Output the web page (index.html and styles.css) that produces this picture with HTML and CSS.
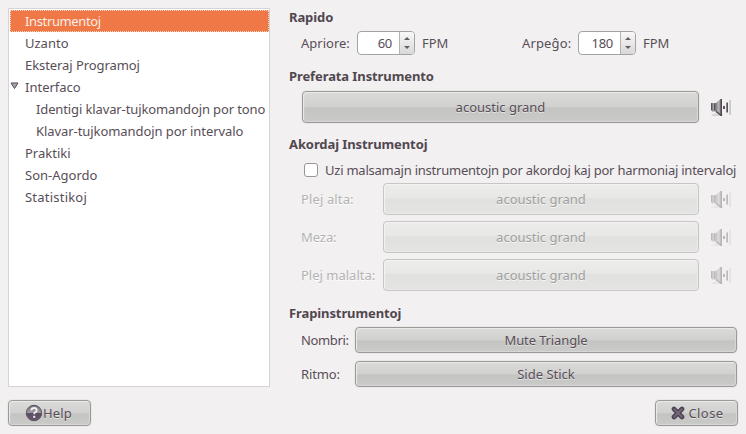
FILE: index.html
```
<!DOCTYPE html>
<html lang="eo">
<head>
<meta charset="utf-8">
<title>Preferoj</title>
<link rel="stylesheet" href="styles.css">
</head>
<body>
<svg class="defs" aria-hidden="true">
  <defs>
    <linearGradient id="metal" gradientUnits="userSpaceOnUse" x1="1" x2="12" y1="0" y2="0">
      <stop offset="0" stop-color="#5d535f"/><stop offset=".25" stop-color="#aaa8aa"/><stop offset=".42" stop-color="#7b747c"/><stop offset=".7" stop-color="#b9b8b6"/><stop offset="1" stop-color="#625963"/>
    </linearGradient>
    <linearGradient id="orb" x1="0" x2="0" y1="0" y2="1">
      <stop offset="0" stop-color="#777078"/><stop offset=".48" stop-color="#a09ba1"/><stop offset=".52" stop-color="#5b4c61"/><stop offset="1" stop-color="#68586e"/>
    </linearGradient>
    <symbol id="speaker" viewBox="0 0 22 20">
      <ellipse cx="7" cy="17.800" rx="6" ry="1.200" fill="#d6d4d4"/>
      <path d="M1 6h5L10.500 2h1.500v17h-1.500L6 14.500H2.500L1 13z" fill="url(#metal)"/>
      <path d="M1.500 6.500v6.500M4.500 6.500v7" stroke="#5b505d" fill="none"/>
      <path d="M11.300 2v17M6 14.500l5 3.700" stroke="#51464f" stroke-width="1.400" fill="none"/>
      <path d="M13 9h2v3h-2z" fill="#5b5363"/>
      <path d="M16.300 5.500h1.700v10h-1.700z" fill="#5c5361"/>
      <path d="M19.300 3h1.700v15h-1.700z" fill="#c8c6c6"/>
    </symbol>
  </defs>
</svg>
<div class="window">
  <div class="content">
    <ul class="tree">
      <li class="selected"><span class="w1">Instrumentoj</span></li>
      <li>Uzanto</li>
      <li><span class="w2">Eksteraj Programoj</span></li>
      <li class="parent"><svg class="expander" width="9" height="8" viewBox="0 0 9 8"><path d="M1 1h7L4.500 6.500z" fill="#a9a6aa" stroke="#514655"/></svg>Interfaco</li>
      <li class="child"><span class="w3">Identigi klavar-tujkomandojn por tono</span></li>
      <li class="child"><span class="w2">Klavar-tujkomandojn por intervalo</span></li>
      <li>Praktiki</li>
      <li>Son-Agordo</li>
      <li><span class="w5">Statistikoj</span></li>
    </ul>
    <div class="panel">
      <h2>Rapido</h2>
      <div class="tempo">
        <div class="field"><label>Apriore:</label><span class="spin"><span class="value">60</span><span class="steps"><i class="up"></i><i class="down"></i></span></span><span>FPM</span></div>
        <div class="field"><label class="w4">Arpeĝo:</label><span class="spin"><span class="value">180</span><span class="steps"><i class="up"></i><i class="down"></i></span></span><span>FPM</span></div>
      </div>
      <h2 class="second">Preferata Instrumento</h2>
      <div class="row main-instrument"><button class="btn">acoustic grand</button><svg class="speaker"><use href="#speaker"/></svg></div>
      <h2 class="third">Akordaj Instrumentoj</h2>
      <div class="check"><span class="box"></span><span class="w6">Uzi malsamajn instrumentojn por akordoj kaj por harmoniaj intervaloj</span></div>
      <div class="chords">
        <div class="row off"><label class="w4">Plej alta:</label><button class="btn" disabled>acoustic grand</button><svg class="speaker"><use href="#speaker"/></svg></div>
        <div class="row off"><label class="w2">Meza:</label><button class="btn" disabled>acoustic grand</button><svg class="speaker"><use href="#speaker"/></svg></div>
        <div class="row off"><label>Plej malalta:</label><button class="btn" disabled>acoustic grand</button><svg class="speaker"><use href="#speaker"/></svg></div>
      </div>
      <h2 class="fourth">Frapinstrumentoj</h2>
      <div class="percussion">
        <div class="row"><label class="w1">Nombri:</label><button class="btn w3">Mute Triangle</button></div>
        <div class="row"><label class="w3">Ritmo:</label><button class="btn">Side Stick</button></div>
      </div>
    </div>
  </div>
  <div class="actions">
    <button class="btn help"><svg width="18" height="18" viewBox="0 0 18 18"><circle cx="9" cy="9" r="7.700" fill="url(#orb)" stroke="#5d5262"/><path d="M6.300 6.500Q6.600 4 9.100 4q2.600 0 2.600 2.200 0 1.300-1.400 2.100Q9.200 9 9.200 10.300" fill="none" stroke="#f2f1f2" stroke-width="1.800"/><path d="M8.200 11.800h2v2h-2z" fill="#f2f1f2"/></svg><span class="w4">Help</span></button>
    <button class="btn close"><svg width="14" height="14" viewBox="0 0 14 14"><path d="M3 3l8 8M11 3l-8 8" stroke="#4d4251" stroke-width="4.600" stroke-linecap="round"/><path d="M3.200 3.200l7.600 7.600M10.800 3.200l-7.600 7.600" stroke="#746a78" stroke-width="1.800" stroke-linecap="round"/></svg><span class="w7">Close</span></button>
  </div>
</div>
</body>
</html>
```
FILE: styles.css
```
* { box-sizing: border-box; }
body {
  margin: 0;
  background: #f2f0f1;
  color: #584e57;
  font: 13px/22px "Noto Sans", "Open Sans", sans-serif;
}
.defs { position: absolute; width: 0; height: 0; }
.window {
  width: 746px;
  height: 434px;
  padding: 8px;
  display: flex;
  flex-direction: column;
}
.content { display: flex; gap: 19px; height: 379px; }

.tree {
  width: 262px;
  margin: 0;
  padding: 1px 0 1px 1px;
  list-style: none;
  background: #fff;
  border: 1px solid #d5d4d4;
  white-space: nowrap;
}
.tree li { height: 22px; padding-left: 15px; line-height: 23px; }
.tree .selected {
  background: #f07746;
  color: #fbeee6;
  border: 1px dotted #fbd8c4;
  padding-left: 14px;
  line-height: 20px;
}
.tree .parent { display: flex; align-items: center; padding-left: 0; }
.tree .child { padding-left: 26px; }
.expander { margin: -3px 6px 0 0; }

.panel { width: 449px; white-space: nowrap; }
h2 {
  margin: 0;
  height: 20px;
  color: #51474f;
  font-size: 13px;
  line-height: 18px;
  letter-spacing: -0.1px;
}
.second { margin-top: 12px; }
.third { margin-top: 12px; }
.fourth { margin-top: 13px; }

.tempo { display: flex; height: 24px; margin-top: 3px; padding-left: 12px; }
.field { display: flex; align-items: center; flex: none; width: 221px; }
.field label { width: 56px; }
.spin {
  display: flex;
  width: 58px;
  height: 24px;
  margin-right: 7px;
  border: 1px solid #a5a3a2;
  border-radius: 4px;
  background: #fff;
  overflow: hidden;
}
.value { width: 41px; padding-right: 7px; text-align: right; line-height: 23px; letter-spacing: -0.3px; }
.steps {
  display: flex;
  flex: 1;
  flex-direction: column;
  align-items: center;
  justify-content: center;
  gap: 6px;
  border-left: 1px solid #b4b2b2;
  background: linear-gradient(#f8f8f8, #d9d9d8);
}
.steps i { width: 0; height: 0; border: 3px solid transparent; }
.steps .up { border-top: 0; border-bottom-color: #655c68; }
.steps .down { border-bottom: 0; border-top-color: #655c68; }

.btn {
  display: flex;
  align-items: center;
  justify-content: center;
  flex: 1;
  height: 26px;
  padding: 0;
  border: 1px solid #9a9a96;
  border-radius: 4px;
  background: linear-gradient(#dadad9, #d1d1d0 48%, #c4c4c3 54%, #cacac9);
  box-shadow: inset 1px 1px 1px #ececeb, inset -1px -1px 1px #d8d8d7, 0 0 0 1px #eae9e7;
  color: #584e57;
  font: inherit;
  text-shadow: 0 1px #e4e4e3;
}
.btn:disabled {
  border-color: #c6c6c4;
  background: linear-gradient(#ececeb, #e8e8e7 44%, #e1e1df 50%, #e4e4e2);
  box-shadow: inset 1px 1px 1px #f4f4f3, inset -1px -1px 1px #ebebea;
  color: #a09f9e;
  text-shadow: 0 1px #f5f5f4;
}
.row { display: flex; align-items: center; }
.speaker { width: 22px; height: 20px; margin-left: 11px; flex: none; }
.main-instrument { margin: 4px 6px 0 13px; }
.main-instrument .btn, .off .btn { height: 32px; }

.check { display: flex; align-items: center; height: 15px; margin: 7px 0 0 15px; }
.box {
  width: 14px;
  height: 14px;
  margin-right: 7px;
  border: 1px solid #989796;
  border-radius: 3px;
  background: #fff;
}
.chords { display: flex; flex-direction: column; gap: 6px; margin: 6px 6px 0 12px; }
.off label { width: 82px; color: #b4b3b2; text-shadow: 0 1px #fff; }
.off .speaker { opacity: .35; filter: grayscale(1); }
.percussion { display: flex; flex-direction: column; gap: 8px; margin: 3px 1px 0 12px; }
.percussion label { width: 54px; }

.actions { display: flex; justify-content: space-between; margin-top: 13px; }
.actions .btn { flex: none; }
.actions .help { width: 83px; padding-right: 2px; }
.actions .close { width: 83px; gap: 4px; padding-left: 1px; }

.w1 { letter-spacing: -0.37px; }
.w2 { letter-spacing: -0.07px; }
.w3 { letter-spacing: -0.12px; }
.w4 { letter-spacing: 0.13px; }
.w5 { letter-spacing: 0.22px; }
.w6 { letter-spacing: -0.23px; }
.w7 { letter-spacing: 0.4px; }
```
